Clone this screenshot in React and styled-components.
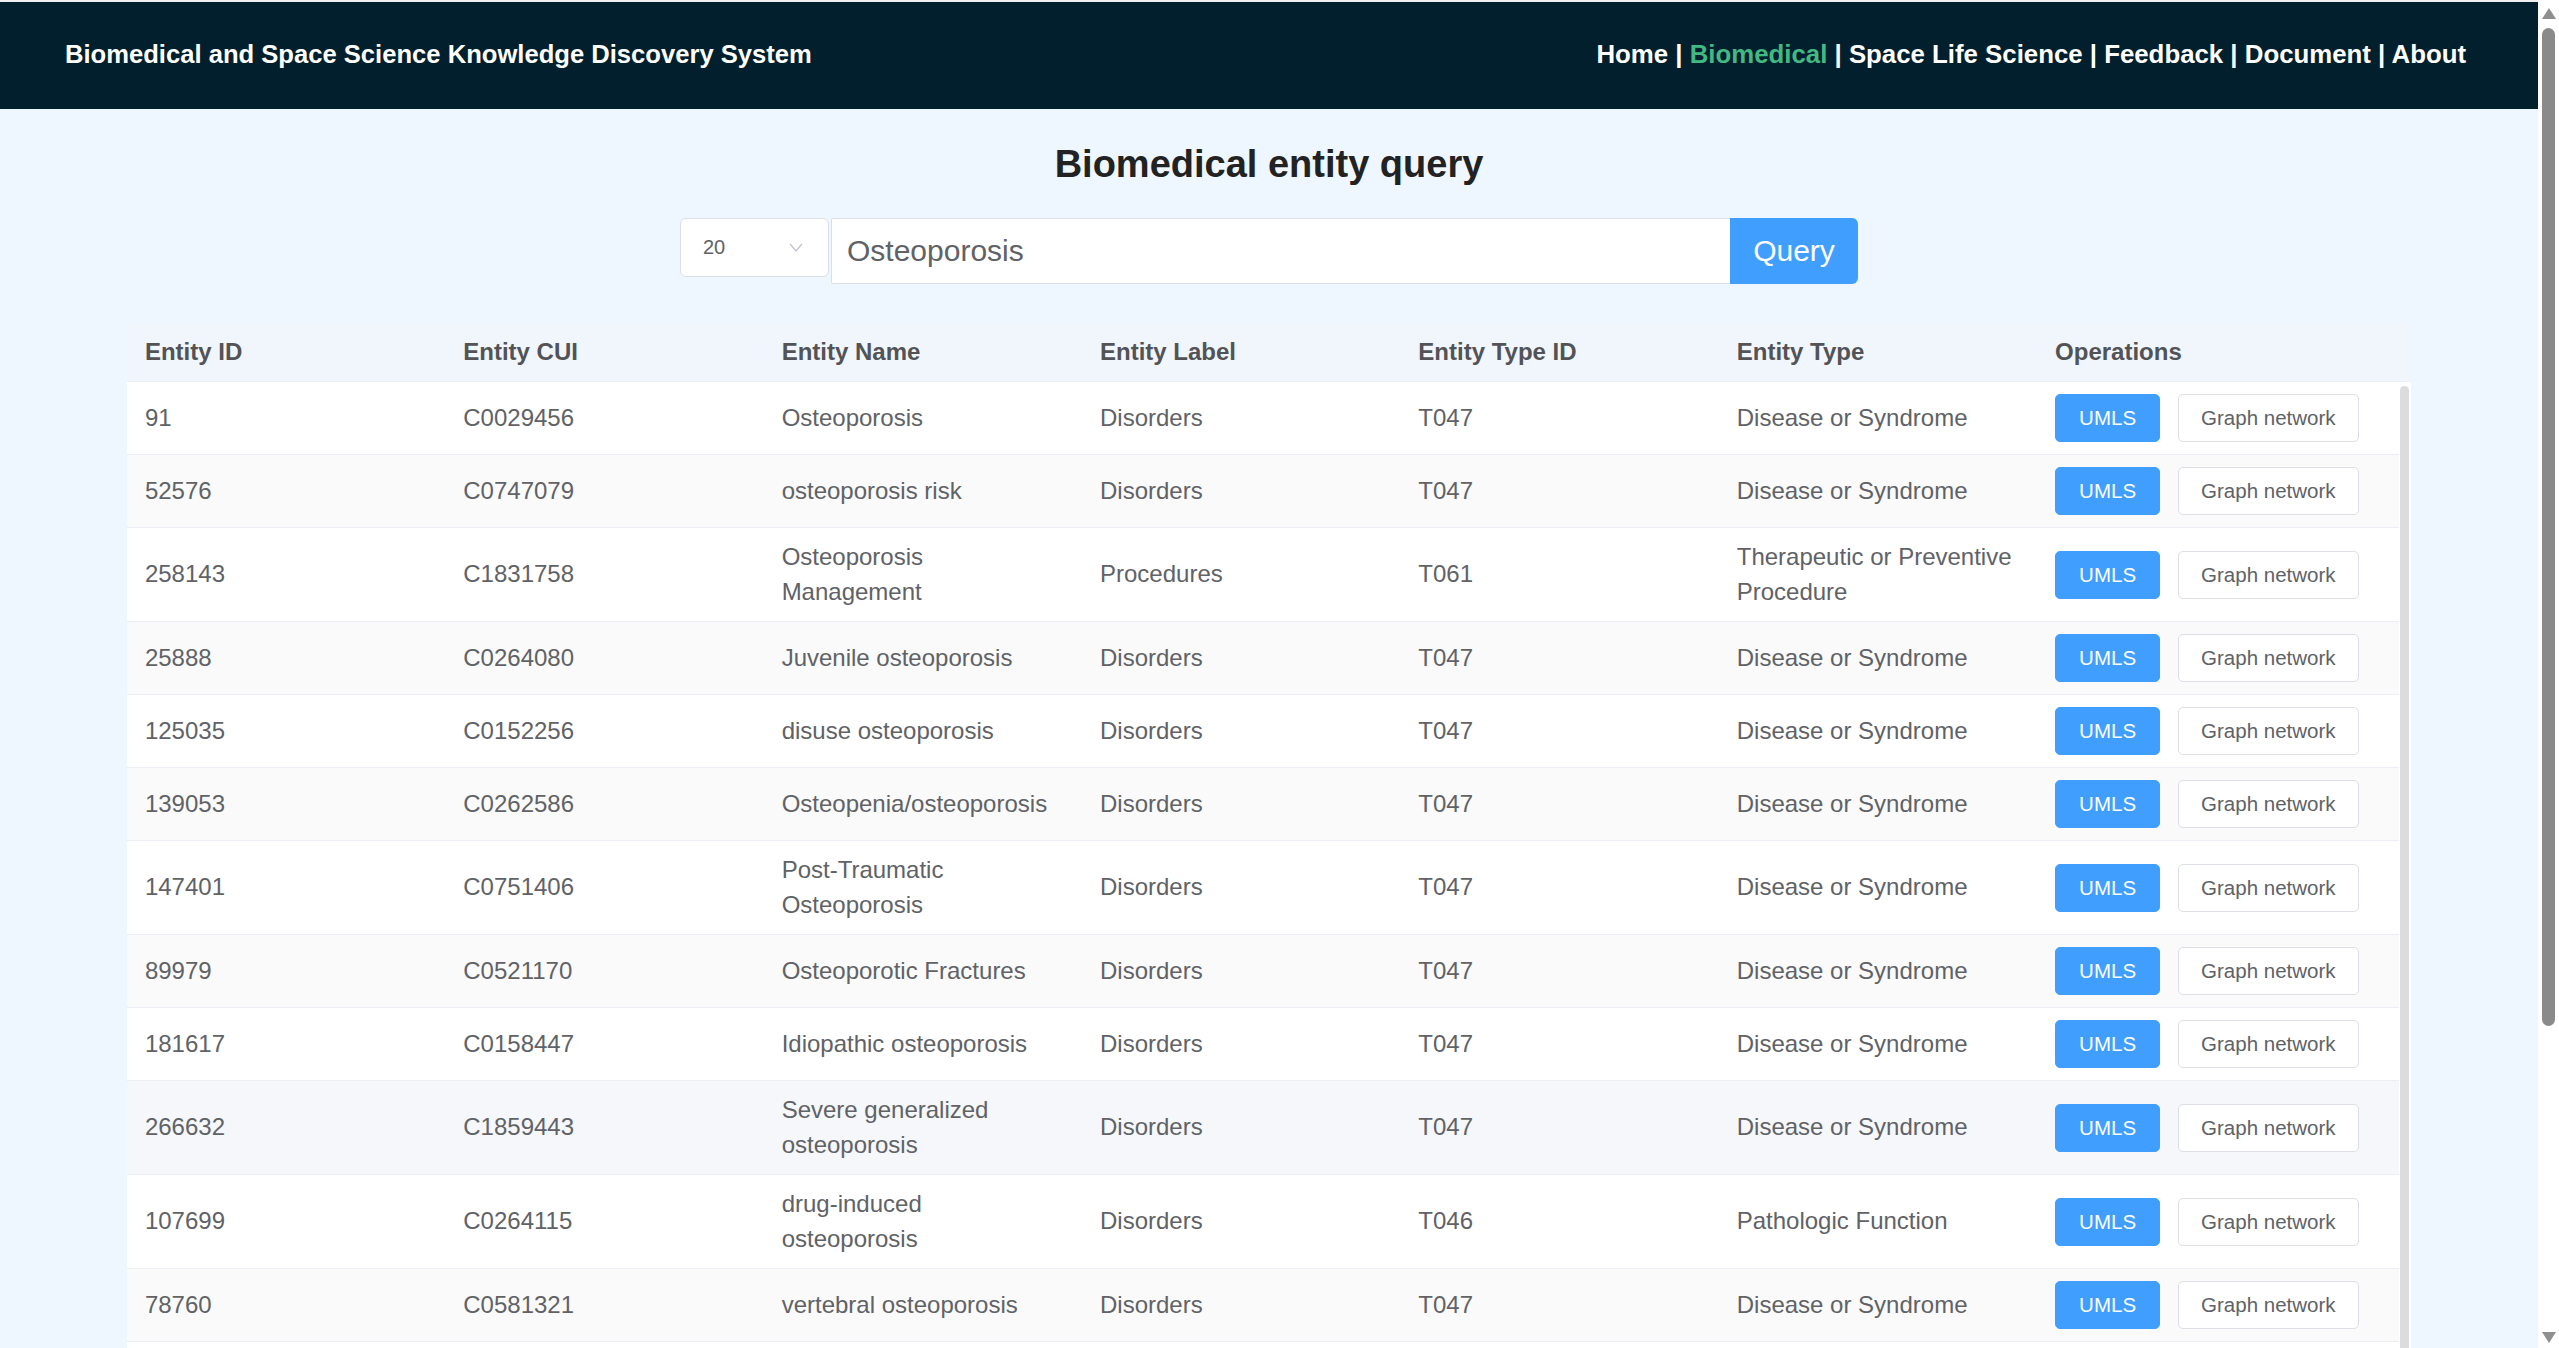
import React from 'react'
import styled, { createGlobalStyle } from 'styled-components'

const GlobalStyle = createGlobalStyle`
    html, body {
        margin: 0;
        padding: 0;
        background: #eef6ff;
        font-family: "Liberation Sans", Arial, sans-serif;
        overflow: hidden;
    }
`

const rows = [
    { id: '91', cui: 'C0029456', name: 'Osteoporosis', label: 'Disorders', tid: 'T047', type: 'Disease or Syndrome' },
    { id: '52576', cui: 'C0747079', name: 'osteoporosis risk', label: 'Disorders', tid: 'T047', type: 'Disease or Syndrome' },
    { id: '258143', cui: 'C1831758', name: 'Osteoporosis Management', label: 'Procedures', tid: 'T061', type: 'Therapeutic or Preventive Procedure' },
    { id: '25888', cui: 'C0264080', name: 'Juvenile osteoporosis', label: 'Disorders', tid: 'T047', type: 'Disease or Syndrome' },
    { id: '125035', cui: 'C0152256', name: 'disuse osteoporosis', label: 'Disorders', tid: 'T047', type: 'Disease or Syndrome' },
    { id: '139053', cui: 'C0262586', name: 'Osteopenia/osteoporosis', label: 'Disorders', tid: 'T047', type: 'Disease or Syndrome' },
    { id: '147401', cui: 'C0751406', name: 'Post-Traumatic Osteoporosis', label: 'Disorders', tid: 'T047', type: 'Disease or Syndrome' },
    { id: '89979', cui: 'C0521170', name: 'Osteoporotic Fractures', label: 'Disorders', tid: 'T047', type: 'Disease or Syndrome' },
    { id: '181617', cui: 'C0158447', name: 'Idiopathic osteoporosis', label: 'Disorders', tid: 'T047', type: 'Disease or Syndrome' },
    { id: '266632', cui: 'C1859443', name: 'Severe generalized osteoporosis', label: 'Disorders', tid: 'T047', type: 'Disease or Syndrome', hover: true },
    { id: '107699', cui: 'C0264115', name: 'drug-induced osteoporosis', label: 'Disorders', tid: 'T046', type: 'Pathologic Function' },
    { id: '78760', cui: 'C0581321', name: 'vertebral osteoporosis', label: 'Disorders', tid: 'T047', type: 'Disease or Syndrome' },
    { id: '95417', cui: 'C0029459', name: 'Senile osteoporosis', label: 'Disorders', tid: 'T047', type: 'Disease or Syndrome' },
]

const links = ['Home', 'Biomedical', 'Space Life Science', 'Feedback', 'Document', 'About']

export default function App() {
    return (
        <Page>
            <GlobalStyle />
            <Content>
                <NavBar>
                    <Brand>Biomedical and Space Science Knowledge Discovery System</Brand>
                    <NavLinks>
                        {links.map((l, i) => (
                            <React.Fragment key={l}>
                                {i > 0 && ' | '}
                                <NavLink active={l === 'Biomedical'}>{l}</NavLink>
                            </React.Fragment>
                        ))}
                    </NavLinks>
                </NavBar>
                <Main>
                    <Title>Biomedical entity query</Title>
                    <SearchBar>
                        <SizeSelect>
                            <span>20</span>
                            <svg width="14" height="9" viewBox="0 0 14 9">
                                <polyline points="1,1 7,8 13,1" fill="none" stroke="#c0c4cc" strokeWidth="1.3" />
                            </svg>
                        </SizeSelect>
                        <SearchInput defaultValue="Osteoporosis" />
                        <QueryButton>Query</QueryButton>
                    </SearchBar>
                    <Table>
                        <HeadRow>
                            <HeadCell>Entity ID</HeadCell>
                            <HeadCell>Entity CUI</HeadCell>
                            <HeadCell>Entity Name</HeadCell>
                            <HeadCell>Entity Label</HeadCell>
                            <HeadCell>Entity Type ID</HeadCell>
                            <HeadCell>Entity Type</HeadCell>
                            <HeadCell>Operations</HeadCell>
                        </HeadRow>
                        <Body>
                            <Rows>
                                {rows.map((r, i) => (
                                    <Row key={r.id} striped={i % 2 === 1} hover={r.hover}>
                                        <Cell>{r.id}</Cell>
                                        <Cell>{r.cui}</Cell>
                                        <Cell>{r.name}</Cell>
                                        <Cell>{r.label}</Cell>
                                        <Cell>{r.tid}</Cell>
                                        <Cell>{r.type}</Cell>
                                        <Cell>
                                            <Ops>
                                                <SmallButton primary>UMLS</SmallButton>
                                                <SmallButton>Graph network</SmallButton>
                                            </Ops>
                                        </Cell>
                                    </Row>
                                ))}
                            </Rows>
                            <InnerTrack>
                                <InnerThumb />
                            </InnerTrack>
                        </Body>
                    </Table>
                </Main>
            </Content>
            <PageScrollbar>
                <Arrow up />
                <PageThumb />
                <Arrow />
            </PageScrollbar>
        </Page>
    )
}

const Page = styled.div`
    display: flex;
    height: 100vh;
    background: #eef6ff;
    overflow: hidden;
`
const Content = styled.div`
    flex: 1;
    min-width: 0;
`
const PageScrollbar = styled.aside`
    width: 21px;
    flex: none;
    background: #fff;
    display: flex;
    flex-direction: column;
    align-items: center;
    padding: 8px 0 5px;
    box-sizing: border-box;
`
const Arrow = styled.div`
    width: 0;
    height: 0;
    border-left: 7.5px solid transparent;
    border-right: 7.5px solid transparent;
    ${props => props.up
        ? 'border-bottom: 11px solid #8f8f8f; margin-bottom: 9px;'
        : 'border-top: 11px solid #8f8f8f; margin-top: auto;'}
`
const PageThumb = styled.div`
    width: 13px;
    height: 998px;
    border-radius: 7px;
    background: #8a8a8a;
`
const NavBar = styled.header`
    height: 107px;
    border-top: 2px solid #f0f0f0;
    background: #021f2e;
    display: flex;
    align-items: center;
    justify-content: space-between;
    padding: 0 72px 0 65px;
    color: #fff;
    font-size: 25.6px;
    font-weight: bold;
`
const Brand = styled.div`
    padding-bottom: 2px;
`
const NavLinks = styled.nav`
    white-space: pre;
    padding-bottom: 2px;
    font-size: 25.8px;
`
const NavLink = styled.span`
    color: ${props => props.active ? '#42b983' : '#fff'};
    cursor: pointer;
`
const Main = styled.main`
    display: flex;
    flex-direction: column;
    align-items: center;
    padding-top: 33px;
`
const Title = styled.h2`
    margin: 0;
    font-size: 38px;
    line-height: 44px;
    color: #222;
    font-weight: bold;
`
const SearchBar = styled.div`
    margin-top: 32px;
    display: flex;
    align-items: flex-start;
    gap: 2px;
`
const SizeSelect = styled.div`
    box-sizing: border-box;
    width: 149px;
    height: 59px;
    background: #fff;
    border: 1px solid #dcdfe6;
    border-radius: 6px;
    display: flex;
    align-items: center;
    justify-content: space-between;
    padding: 0 25px 0 22px;
    font-size: 20px;
    color: #606266;
`
const SearchInput = styled.input`
    box-sizing: border-box;
    width: 899px;
    height: 66px;
    border: 1px solid #dcdfe6;
    border-right: none;
    border-radius: 2px 0 0 2px;
    padding: 0 15px;
    font-family: "Liberation Sans", Arial, sans-serif;
    font-size: 30px;
    color: #606266;
    outline: none;
    background: #fff;
`
const QueryButton = styled.button`
    margin-left: -2px;
    width: 128px;
    height: 66px;
    border: none;
    border-radius: 0 6px 6px 0;
    background: #409eff;
    color: #fff;
    font-family: "Liberation Sans", Arial, sans-serif;
    font-size: 30px;
    cursor: pointer;
`
const Table = styled.section`
    margin-top: 39px;
    width: 90%;
`
const columns = `repeat(6, 1fr) 362px`
const HeadRow = styled.div`
    display: grid;
    grid-template-columns: ${columns};
    padding-right: 12px;
    background: #f1f5fc;
    border-bottom: 1px solid #ebeef5;
`
const HeadCell = styled.div`
    padding: 12px 18px;
    line-height: 34px;
    font-size: 24px;
    font-weight: bold;
    color: #515356;
`
const Body = styled.div`
    height: 967px;
    overflow: hidden;
    display: grid;
    grid-template-columns: 1fr 12px;
    background: #fff;
`
const Rows = styled.div`
    min-width: 0;
`
const InnerTrack = styled.div`
    padding: 4px 2px 0 1px;
`
const InnerThumb = styled.div`
    height: 1200px;
    border-radius: 5px;
    background: #dcdcdf;
`
const Row = styled.div`
    display: grid;
    grid-template-columns: ${columns};
    border-bottom: 1px solid #ebeef5;
    background: ${props => props.hover ? '#f5f7fa' : props.striped ? '#fafafa' : '#fff'};
`
const Cell = styled.div`
    display: flex;
    align-items: center;
    padding: 12px 18px;
    line-height: 34.5px;
    font-size: 24px;
    color: #606266;
`
const Ops = styled.div`
    display: flex;
    gap: 18px;
`
const SmallButton = styled.button`
    height: 48px;
    padding: 0 ${props => props.primary ? '23px' : '22px'};
    border-radius: 5px;
    border: 1px solid ${props => props.primary ? '#409eff' : '#dcdfe6'};
    background: ${props => props.primary ? '#409eff' : '#fff'};
    color: ${props => props.primary ? '#fff' : '#606266'};
    font-family: "Liberation Sans", Arial, sans-serif;
    font-size: 20.5px;
    cursor: pointer;
`
